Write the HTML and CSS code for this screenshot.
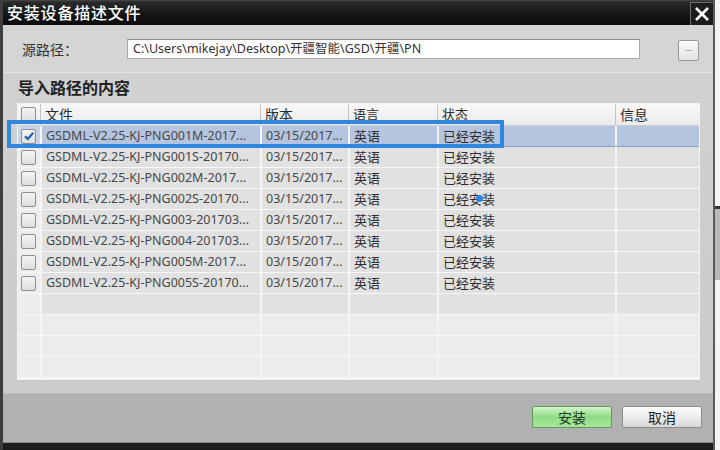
FILE: index.html
```html
<!DOCTYPE html>
<html lang="zh">
<head>
<meta charset="utf-8">
<title>安装设备描述文件</title>
<link rel="stylesheet" href="styles.css">
</head>
<body>
<div class="screen">
  <div class="dialog">
    <div class="titlebar">
      <span class="title">安装设备描述文件</span>
      <div class="close">
        <svg width="16" height="16" viewBox="0 0 16 16"><path d="M2 2 L14 14 M14 2 L2 14" stroke="#fff" stroke-width="2.6" fill="none"/></svg>
      </div>
    </div>
    <div class="source">
      <span class="label">源路径：</span>
      <div class="path">C:\Users\mikejay\Desktop\开疆智能\GSD\开疆\PN</div>
      <div class="browse">...</div>
    </div>
    <div class="content">
      <div class="section-title">导入路径的内容</div>
      <div class="table">
        <div class="row head">
          <div class="cell chk"><span class="box"></span></div>
          <div class="cell">文件</div>
          <div class="cell">版本</div>
          <div class="cell">语言</div>
          <div class="cell">状态</div>
          <div class="cell">信息</div>
        </div>
        <div class="row selected">
          <div class="cell chk"><span class="box checked"><svg width="12" height="12" viewBox="0 0 12 12"><path d="M2 6.2 L4.8 9 L10.2 2.8" stroke="#1d5fb0" stroke-width="2.2" fill="none"/></svg></span></div>
          <div class="cell">GSDML-V2.25-KJ-PNG001M-2017...</div>
          <div class="cell">03/15/2017...</div>
          <div class="cell">英语</div>
          <div class="cell">已经安装</div>
          <div class="cell"></div>
        </div>
        <div class="row">
          <div class="cell chk"><span class="box"></span></div>
          <div class="cell">GSDML-V2.25-KJ-PNG001S-20170...</div>
          <div class="cell">03/15/2017...</div>
          <div class="cell">英语</div>
          <div class="cell">已经安装</div>
          <div class="cell"></div>
        </div>
        <div class="row">
          <div class="cell chk"><span class="box"></span></div>
          <div class="cell">GSDML-V2.25-KJ-PNG002M-2017...</div>
          <div class="cell">03/15/2017...</div>
          <div class="cell">英语</div>
          <div class="cell">已经安装</div>
          <div class="cell"></div>
        </div>
        <div class="row">
          <div class="cell chk"><span class="box"></span></div>
          <div class="cell">GSDML-V2.25-KJ-PNG002S-20170...</div>
          <div class="cell">03/15/2017...</div>
          <div class="cell">英语</div>
          <div class="cell">已经安装</div>
          <div class="cell"></div>
        </div>
        <div class="row">
          <div class="cell chk"><span class="box"></span></div>
          <div class="cell">GSDML-V2.25-KJ-PNG003-201703...</div>
          <div class="cell">03/15/2017...</div>
          <div class="cell">英语</div>
          <div class="cell">已经安装</div>
          <div class="cell"></div>
        </div>
        <div class="row">
          <div class="cell chk"><span class="box"></span></div>
          <div class="cell">GSDML-V2.25-KJ-PNG004-201703...</div>
          <div class="cell">03/15/2017...</div>
          <div class="cell">英语</div>
          <div class="cell">已经安装</div>
          <div class="cell"></div>
        </div>
        <div class="row">
          <div class="cell chk"><span class="box"></span></div>
          <div class="cell">GSDML-V2.25-KJ-PNG005M-2017...</div>
          <div class="cell">03/15/2017...</div>
          <div class="cell">英语</div>
          <div class="cell">已经安装</div>
          <div class="cell"></div>
        </div>
        <div class="row">
          <div class="cell chk"><span class="box"></span></div>
          <div class="cell">GSDML-V2.25-KJ-PNG005S-20170...</div>
          <div class="cell">03/15/2017...</div>
          <div class="cell">英语</div>
          <div class="cell">已经安装</div>
          <div class="cell"></div>
        </div>
        <div class="row">
          <div class="cell chk"></div><div class="cell"></div><div class="cell"></div><div class="cell"></div><div class="cell"></div><div class="cell"></div>
        </div>
        <div class="row empty">
          <div class="cell chk"></div><div class="cell"></div><div class="cell"></div><div class="cell"></div><div class="cell"></div><div class="cell"></div>
        </div>
        <div class="row empty">
          <div class="cell chk"></div><div class="cell"></div><div class="cell"></div><div class="cell"></div><div class="cell"></div><div class="cell"></div>
        </div>
        <div class="row empty last">
          <div class="cell chk"></div><div class="cell"></div><div class="cell"></div><div class="cell"></div><div class="cell"></div><div class="cell"></div>
        </div>
      </div>
    </div>
    <div class="footer">
      <div class="btn btn-ok">安装</div>
      <div class="btn">取消</div>
    </div>
    <div class="bottom-edge"></div>
    <div class="highlight"></div>
    <div class="cursor-dot"></div>
  </div>
  <div class="outside">
    <div class="outside-block"></div>
  </div>
</div>
</body>
</html>
```

FILE: styles.css
```css
* { box-sizing: border-box; }
html, body { margin: 0; padding: 0; }
body {
  width: 720px;
  height: 450px;
  overflow: hidden;
  background: #f2f2f2;
  font-family: "Noto Sans", "Noto Sans CJK SC", sans-serif;
  color: #2a2a2a;
}
.screen {
  display: flex;
  width: 720px;
  height: 450px;
}
.dialog {
  position: relative;
  width: 715px;
  height: 450px;
  display: flex;
  flex-direction: column;
  background: #d1d1d1;
  border-left: 3px solid #3e3e3e;
  border-right: 2px solid #5a5a5a;
}
.titlebar {
  height: 25px;
  flex: none;
  display: flex;
  align-items: center;
  justify-content: space-between;
  background: linear-gradient(#4a4a4a 0, #2a2a2a 2px, #141414 60%, #0c0c0c 100%);
  padding-left: 4px;
}
.title {
  font-family: "Noto Sans CJK SC", sans-serif;
  color: #ffffff;
  font-size: 16px;
  font-weight: 500;
  letter-spacing: 0.8px;
  line-height: 25px;
}
.close {
  width: 23px;
  height: 23px;
  margin-top: 2px;
  display: flex;
  align-items: center;
  justify-content: center;
  background: #1c1c1c;
  border-left: 1px solid #6a6a6a;
  border-top: 1px solid #6a6a6a;
}
.source {
  height: 48px;
  flex: none;
  display: flex;
  align-items: center;
  padding-left: 19px;
  padding-top: 1px;
  border-bottom: 1px solid #e4e4e4;
  background: #d5d5d5;
}
.label {
  font-family: "Noto Sans CJK SC", sans-serif;
  font-size: 14px;
  color: #333;
  width: 105px;
  flex: none;
}
.path {
  width: 513px;
  height: 20px;
  flex: none;
  background: #ffffff;
  border: 1px solid #a9a9a9;
  border-top-color: #8c8c8c;
  font-size: 12.5px;
  line-height: 18px;
  padding-left: 5px;
  color: #333;
  white-space: nowrap;
  overflow: hidden;
}
.browse {
  width: 21px;
  height: 21px;
  flex: none;
  margin-left: 38px;
  margin-top: 2px;
  border: 1px solid #9a9a9a;
  border-radius: 2px;
  background: linear-gradient(#fbfbfb, #e2e2e2);
  font-size: 9px;
  line-height: 14px;
  text-align: center;
  color: #666;
}
.content {
  flex: none;
  height: 320px;
  padding: 3px 0 0 14px;
  background: linear-gradient(#d1d1d1, #cbcbcb);
}
.section-title {
  font-family: "Noto Sans CJK SC", sans-serif;
  font-weight: 700;
  font-size: 16px;
  line-height: 22px;
  height: 27px;
  padding-left: 1px;
  color: #222;
}
.table {
  width: 683px;
  border: 1px solid #f3f3f3;
  background: #f3f3f3;
  display: flex;
  flex-direction: column;
}
.row {
  display: grid;
  grid-template-columns: 22px 220px 88px 89px 178px 1fr;
  height: 21px;
  background: #e1e1e1;
  border-bottom: 1px solid #f7f7f7;
}
.row.head {
  height: 22px;
  background: linear-gradient(#f8f8f8, #ebebeb);
  border-bottom: 1px solid #cdcdcd;
}
.row.selected {
  background: #b5c5df;
  border-bottom: 1px solid #8aa0c4;
}
.row.empty { background: #ececec; }
.row.last { height: 22px; border-bottom: 2px solid #f7f7f7; }
.cell {
  font-size: 12.5px;
  line-height: 20px;
  color: #474747;
  padding-left: 4px;
  white-space: nowrap;
  overflow: hidden;
  border-left: 2px solid #f4f4f4;
}
.row .cell:first-child { border-left: none; }
.head .cell {
  font-family: "Noto Sans CJK SC", sans-serif;
  font-size: 14px;
  color: #2a2a2a;
  border-left: 1px solid #c6c6c6;
  line-height: 20px;
}
.row .cell:nth-child(4), .row .cell:nth-child(5) {
  font-family: "Noto Sans CJK SC", sans-serif;
  font-size: 13px;
  color: #2e2e2e;
}
.cell.chk {
  background: #ededed;
  padding-left: 3px;
  display: flex;
  align-items: center;
}
.selected .cell.chk { background: #c6d3e8; }
.head .cell.chk { background: transparent; }
.box {
  width: 15px;
  height: 15px;
  border: 1px solid #8e8e8e;
  border-radius: 2px;
  background: linear-gradient(#f4f4f4, #dedede);
  display: flex;
  align-items: center;
  justify-content: center;
}
.footer {
  flex: none;
  height: 49px;
  background: #b1b1b1;
  border-top: 1px solid #bdbdbd;
  display: flex;
  justify-content: flex-end;
  align-items: flex-start;
  gap: 10px;
  padding: 12px 11px 0 0;
}
.btn {
  width: 80px;
  height: 22px;
  border: 1px solid #8c8c8c;
  border-radius: 2px;
  background: linear-gradient(#fdfdfd, #ececec 50%, #d9d9d9);
  font-family: "Noto Sans CJK SC", sans-serif;
  font-size: 14px;
  line-height: 20px;
  text-align: center;
  color: #222;
}
.btn-ok {
  border-color: #5f9a55;
  background: linear-gradient(#d4f3cc, #8fdc82 50%, #a9e59d);
  color: #1f3a1a;
}
.bottom-edge {
  flex: 1;
  background: #1d1d1d;
  border-top: 1px solid #8a8a8a;
}
.highlight {
  position: absolute;
  left: 4px;
  top: 120px;
  width: 497px;
  height: 28px;
  border: 4px solid #2f86dc;
}
.cursor-dot {
  position: absolute;
  left: 473px;
  top: 195px;
  width: 7px;
  height: 7px;
  border-radius: 50%;
  background: #2a86e6;
}
.outside {
  flex: 1;
  background: #f4f4f4;
  padding-top: 206px;
}
.outside-block {
  height: 74px;
  background: #b9b9b9;
  border-top: 3px solid #333;
}
```
